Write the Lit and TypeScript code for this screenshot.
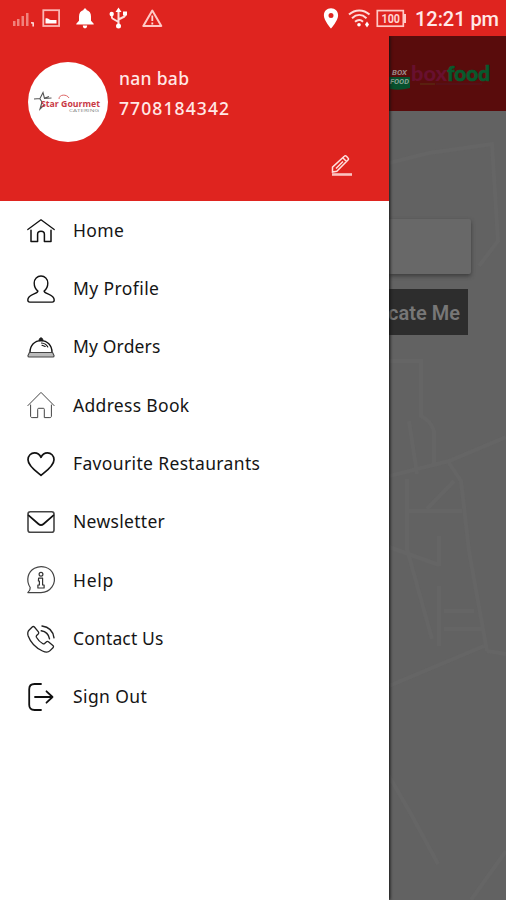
import { LitElement, html, svg, css, type TemplateResult, type SVGTemplateResult } from "lit";
import { customElement } from "lit/decorators.js";
import { styleMap } from "lit/directives/style-map.js";

interface MenuItem {
  label: string;
  tracking: number;
  icon: SVGTemplateResult;
}

const ITEMS: MenuItem[] = [
  {
    label: "Home",
    tracking: 0.4,
    icon: svg`<path d="M.8 13.6 14 3.8l13.2 9.8" stroke-width="1.3"/><path d="M4 14.2v11.3h6.6v-7.2c0-4 6.8-4 6.8 0v7.2H24V14.2" stroke-width="1.5"/>`,
  },
  {
    label: "My Profile",
    tracking: 0.4,
    icon: svg`<path d="M10.9 16.1C8.4 14.2 7.2 11 7.2 8c0-4.300 3-7 6.800-7s6.800 2.700 6.800 7c0 3-1.200 6.200-3.700 8.100.2 3.100 10.100 3 10.100 9 0 1.400-.7 2-1.900 2H2.700c-1.200 0-1.900-.6-1.900-2 0-6 9.900-5.900 10.100-9z" stroke-width="1.4"/>`,
  },
  {
    label: "My Orders",
    tracking: 0.15,
    icon: svg`<path d="M3 19.400C3 12.200 7.800 7.600 14 7.600s11 4.600 11 11.800" stroke-width="1.4"/><path d="M12 7.400c0-3.600 4-3.600 4 0z" fill="#222" stroke-width=".8"/><path d="M2.400 19.500h23.200l1.500 3.200c0 .8-.5 1.300-1.300 1.300H2.200c-.8 0-1.300-.5-1.300-1.300z" fill="#bbb" stroke="#444" stroke-width="1.100"/><path d="M14.500 10c3 .2 5 1.500 6.300 4M15 12.200l3.200 1.300" stroke-width="1.100"/>`,
  },
  {
    label: "Address Book",
    tracking: 0.32,
    icon: svg`<g stroke="#444" stroke-width="1"><path d="M.9 14.600 14 1.400l13.100 13.200"/><path d="M3.600 14v11.100c0 1 .5 1.500 1.500 1.500h5.600v-8.300c0-.7.300-1 1-1h4.600c.7 0 1 .3 1 1v8.300h5.600c1 0 1.500-.5 1.500-1.500V14"/></g>`,
  },
  {
    label: "Favourite Restaurants",
    tracking: 0.35,
    icon: svg`<path d="M14 25.300C9.200 21.400 1 16 1 9.700 1 5.600 4 2.900 7.500 2.900c2.900 0 5.300 1.800 6.500 4.400 1.200-2.600 3.600-4.400 6.500-4.400C24 2.900 27 5.600 27 9.700c0 6.300-8.200 11.700-13 15.600z" stroke-width="1.700"/>`,
  },
  {
    label: "Newsletter",
    tracking: 0.3,
    icon: svg`<rect x="1" y="3.700" width="26" height="20.600" rx="2.300" stroke="#444" stroke-width="1.600"/><path d="M1.600 7.300 11.500 16c1.800 1.500 3.200 1.500 5 0l9.900-8.700" stroke-width="1.700"/>`,
  },
  {
    label: "Help",
    tracking: 0.7,
    icon: svg`<path d="M3.200 21.500C-1.500 14.300 1 5.800 7.500 2.300 14.500-1.400 23.500 1.200 26.400 8.500c3.600 9-3.200 18.100-12.400 18.100H.8c1.500-1.300 2.800-2.500 2.400-5.100z" stroke="#444" stroke-width="1.200"/><circle cx="14" cy="8.200" r="1.900" stroke="#333" stroke-width="1.200"/><path d="M11.600 12.200h4v6.800h1.500v3h-6.200v-3h1.500v-4h-1z" stroke="#333" stroke-width="1.200"/>`,
  },
  {
    label: "Contact Us",
    tracking: 0.15,
    icon: svg`<path d="M2.200 5 5.200 2c.7-.7 1.500-.7 2.200 0l4 4.800c.6.800.5 1.500-.2 2.200L9.600 10.500c-.5.600-.5 1.100-.2 1.700 1.600 2.800 3.700 4.900 6.500 6.500.6.300 1.100.3 1.700-.2l1.600-1.500c.7-.7 1.400-.8 2.200-.2l4.500 3.700c.8.700.8 1.500.1 2.200l-3.200 3.200c-1.800 1.800-4.800 1.300-7.300.1C9 23 3.500 17.200 1.200 11 .4 8.600.6 6.600 2.200 5z" stroke="#222" stroke-width="1.300"/><path d="M14.200 5.800c4.600.7 7.500 3.500 8.300 8.100M15 1c6.500.8 11 5.200 12 11.800" stroke="#222" stroke-width="1.400"/>`,
  },
  {
    label: "Sign Out",
    tracking: 0.4,
    icon: svg`<path d="M14 1H7.500C4.200 1 2.200 3 2.200 6.200v15.600C2.200 25 4.200 27 7.500 27H14" stroke-width="1.800"/><path d="M8 14h17.500M19.500 8.300l6 5.700-6 5.700" stroke-width="1.800"/>`,
  },
];

@customElement("status-bar")
class StatusBar extends LitElement {
  static styles = css`
    :host { display: flex; height: 36px; background: #df241f; align-items: center; }
    svg { display: block; flex: none; }
    .clock { margin-left: 9px; font: 500 20px/36px Roboto, sans-serif; color: #ffe9e7; letter-spacing: -.05px; padding-top: 2px; white-space: nowrap; }
    .num { font: 700 12px Roboto, sans-serif; }
  `;
  render() {
    return html`
      <svg width="406" height="36" viewBox="0 0 406 36" fill="none">
        <g fill="#f0827c"><path d="M13 21h2.500v5H13zM17 19h2.500v7H17zM21.500 16H24v10h-2.500zM26 13h2.500v13H26z"/></g>
        <path d="M31 22.300h2.800v4.300h-1.300v-3H31z" fill="#fff"/>
        <rect x="43.300" y="10.200" width="15.800" height="15.800" stroke="#fbb6b2" stroke-width="1.800"/>
        <path d="M45.500 18.500c2.200-1 3.500 1.200 5.500 1.500l5.500 0v3.500h-11z" fill="#fff"/>
        <path d="M85 8.500c1 0 1.500.6 1.500 1.600 3 .8 4.500 3.200 4.500 6.400v4.200l2.700 3v.8H76.300v-.8l2.700-3v-4.200c0-3.200 1.500-5.600 4.500-6.400 0-1 .5-1.600 1.500-1.600zM82.800 25.500h4.400c-.1 3.800-4.300 3.800-4.400 0z" fill="#fff"/>
        <g stroke="#ffdedc" stroke-width="2"><path d="M118.500 10v15M118.500 22l-6-3.500c-.7-.5-.8-1-.8-4M118.500 19.500l6-3c.7-.4.8-1 .8-3.500"/></g>
        <g fill="#fff"><path d="m118.500 7.500 3 4.500h-6zM123 11.500h4v4h-4z"/><circle cx="111.700" cy="14" r="2.200"/><circle cx="118.500" cy="26" r="2.500"/></g>
        <path d="m152.300 10.600 9 15.400h-18z" stroke="#ffc9c6" stroke-width="2" stroke-linejoin="round"/>
        <path d="M152.300 15.500v5.500M152.300 22.500v2" stroke="#ffd9d7" stroke-width="1.800"/>
        <path fill-rule="evenodd" d="M331 8.300c4.200 0 7.100 3 7.100 7.100 0 5-7.100 13-7.100 13s-7.100-8-7.100-13c0-4.100 2.900-7.100 7.100-7.100zm0 4.700a2.500 2.500 0 1 0 0 5 2.500 2.500 0 0 0 0-5z" fill="#fff"/>
        <g stroke="#ffdbd9" stroke-width="2"><path d="M349 14.500c6-5.500 14.500-5.500 20.500 0M352 18.200c4.500-4.200 10-4.200 14.500 0M355 21.800c3-2.500 5.500-2.500 8 0"/></g>
        <circle cx="359" cy="24.800" r="1.800" fill="#fff"/><path d="m367 21.500 2 3-2 3-2-3z" fill="#fff"/>
        <rect x="377.300" y="10.600" width="26" height="15.600" stroke="#ffc9c6" stroke-width="1.700"/><path d="M404 14h2v9h-2z" fill="#ffc9c6"/>
        <text class="num" x="381.500" y="22.700" fill="#ffd3d0" textLength="18.500" lengthAdjust="spacingAndGlyphs">100</text>
      </svg>
      <span class="clock">12:21 pm</span>
    `;
  }
}

@customElement("nav-drawer")
class NavDrawer extends LitElement {
  static styles = css`
    :host { display: flex; flex-direction: column; width: 389px; flex: none; background: #fff; position: relative; z-index: 1; box-shadow: 1px 0 3px #111; font-family: "Noto Sans", sans-serif; }
    .head { height: 165px; box-sizing: border-box; background: #df241f; display: flex; padding: 26px 36px 0 28px; color: #ffe8e6; }
    .avatar { width: 80px; height: 80px; border-radius: 50%; background: #fff; flex: none; }
    .who { margin: 1px 0 0 11px; flex: 1; font-size: 17.500px; line-height: 30px; white-space: nowrap; font-weight: 500; }
    .name { letter-spacing: .3px; }
    .tel { letter-spacing: 1.100px; }
    .edit { align-self: flex-end; margin-bottom: 24px; flex: none; }
    .brand { font: 700 9.500px "Open Sans", sans-serif; }
    .tag { font: 4px "Open Sans", sans-serif; }
    ul { list-style: none; margin: 0; padding: 0; }
    li { height: 58.350px; display: flex; align-items: center; padding-left: 27px; gap: 18px; font-size: 17.500px; color: #151515; white-space: nowrap; }
    .label { padding-bottom: 1px; }
    .icon { width: 28px; height: 28px; flex: none; overflow: visible; }
  `;
  render(): TemplateResult {
    return html`
      <div class="head">
        <svg class="avatar" viewBox="0 0 80 80">
          <path d="m6 37 6-.5 3-6 1.500 6 7-.5M12 37l2 3-2 7 4-4M17 36l4-1.500" stroke="#555" stroke-width="1.100" fill="none"/>
          <path d="M31 37c0-5 8-5 10-1" stroke="#d66" fill="none"/>
          <text class="brand" x="13" y="44.500" fill="#c93945" textLength="59" lengthAdjust="spacingAndGlyphs">Star Gourmet</text>
          <text class="tag" x="41" y="49.500" fill="#888" textLength="30" lengthAdjust="spacingAndGlyphs">CATERING</text>
        </svg>
        <div class="who"><div class="name">nan bab</div><div class="tel">7708184342</div></div>
        <svg class="edit" width="22" height="24" viewBox="0 0 22 24" fill="none" stroke="#ffe0de" stroke-width="1.500">
          <path d="M1.500 19v-4.800L13.300 3.300c.7-.7 1.400-.7 2.100 0l1.600 1.700c.7.700.7 1.300 0 2L5.800 18.300zM12 5l3.500 3.500M5 15.500l7-7"/><path d="M1 21.500h20" stroke-width="2.600" stroke="#fbc4c1"/>
        </svg>
      </div>
      <ul>
        ${ITEMS.map(
          (i) => html`<li>
            <svg class="icon" viewBox="0 0 28 28" fill="none" stroke="#111" stroke-linejoin="round" stroke-linecap="round">${i.icon}</svg>
            <span class="label" style=${styleMap({ letterSpacing: `${i.tracking}px` })}>${i.label}</span>
          </li>`,
        )}
      </ul>
    `;
  }
}

@customElement("dimmed-page")
class DimmedPage extends LitElement {
  static styles = css`
    :host { display: flex; flex-direction: column; flex: 1; min-width: 0; overflow: hidden; background: #626262; }
    .bar { height: 75px; background: #590c0c; flex: none; }
    .bar svg { display: block; }
    .box { font: italic 700 7px Roboto, sans-serif; }
    .logo { font: 900 20px Lato, sans-serif; }
    .map { flex: 1; display: grid; }
    .streets, .form { grid-area: 1 / 1; }
    .streets { display: block; }
    .form { display: flex; flex-direction: column; padding-top: 108px; }
    .input { width: 82px; height: 55px; background: #686868; border-radius: 0 2px 2px 0; box-shadow: 0 2px 4px #3c3c3c; }
    .btn { margin-top: 15px; width: 79px; height: 46px; background: #2d2d2d; color: #777; display: flex; align-items: center; justify-content: flex-end; overflow: hidden; box-sizing: border-box; padding: 2px 8px 0 0; font: 600 20px Roboto, sans-serif; white-space: nowrap; }
  `;
  render() {
    return html`
      <div class="bar">
        <svg width="117" height="75" viewBox="0 0 117 75">
          <path d="M0 41h21v11q-10 3-20 1z" fill="#07502d"/>
          <text class="box" x="3" y="39" fill="#9b8a8a" textLength="15" lengthAdjust="spacingAndGlyphs">BOX</text>
          <text class="box" x="1" y="48" fill="#8aa397" textLength="19" lengthAdjust="spacingAndGlyphs">FOOD</text>
          <text class="logo" x="22" y="45" fill="#68102f" textLength="36" lengthAdjust="spacingAndGlyphs">box</text>
          <text class="logo" x="58" y="45" fill="#08592d" stroke="#08592d" stroke-width=".6" textLength="43" lengthAdjust="spacingAndGlyphs">food</text>
          <path d="M31 48h15" stroke="#5a3413"/><path d="M47 48h46" stroke="#551522"/>
        </svg>
      </div>
      <div class="map">
        <svg class="streets" width="117" height="789" viewBox="0 0 117 789" fill="none" stroke="#656565" stroke-width="4">
          <path d="M0 52 40 42 103 33 109 130 90 155M0 250h32v55q10 5 13 15v35M20 310l8 53M0 365l60-15 57-24M60 352l12 18 8 70 18 100M65 370 38 398M18 368v70l25 90M18 400h55M0 436l50 18M50 425v30M50 475v60M55 500h30M55 518h38M98 540l19 3M0 575l95-40M0 665l22 38 27 50M117 740l-35 49"/>
        </svg>
        <div class="form"><div class="input"></div><div class="btn">Locate Me</div></div>
      </div>
    `;
  }
}

@customElement("app-root")
class AppRoot extends LitElement {
  static styles = css`
    :host { display: flex; flex-direction: column; width: 506px; height: 900px; overflow: hidden; }
    .main { flex: 1; display: flex; min-height: 0; }
    status-bar { position: relative; z-index: 2; }
  `;
  render() {
    return html`<status-bar></status-bar>
      <div class="main"><nav-drawer></nav-drawer><dimmed-page></dimmed-page></div>`;
  }
}
